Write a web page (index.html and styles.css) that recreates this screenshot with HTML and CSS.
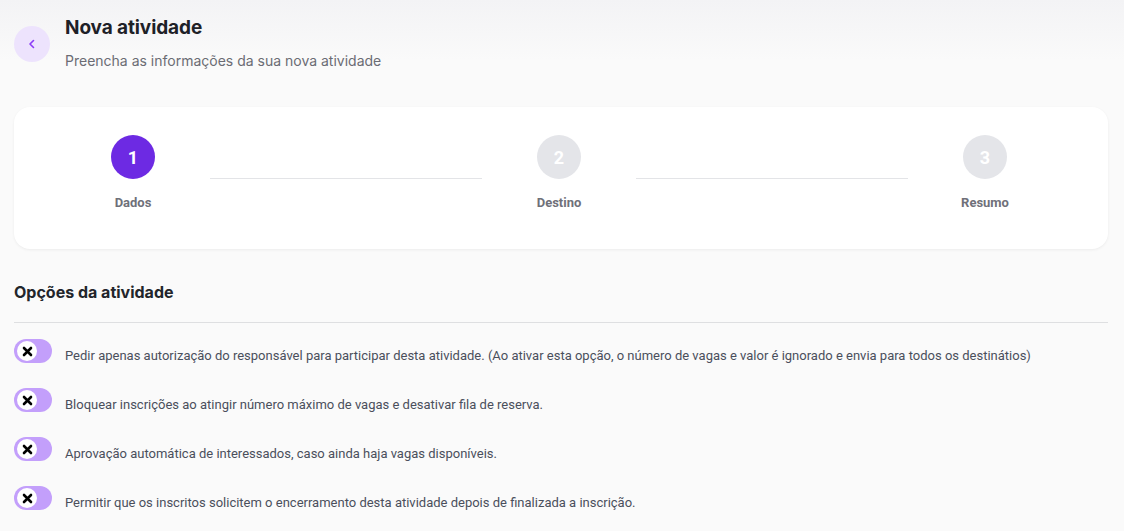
FILE: index.html
```html
<!DOCTYPE html>
<html lang="pt-BR">
<head>
    <meta charset="UTF-8">
    <meta name="viewport" content="width=device-width, initial-scale=1.0">
    <title>Nova atividade</title>
    <link rel="stylesheet" href="styles.css">
</head>
<body>
    <div class="page">
        <div class="header">
            <button class="back-btn" aria-label="Voltar">
                <svg width="12" height="12" viewBox="0 0 12 12"><path d="M7.5 2.5L4 6l3.5 3.5" fill="none" stroke="#8b3cf7" stroke-width="1.6" stroke-linecap="round" stroke-linejoin="round"/></svg>
            </button>
            <div class="header-text">
                <h1>Nova atividade</h1>
                <p>Preencha as informações da sua nova atividade</p>
            </div>
        </div>

        <div class="card steps">
            <div class="step active">
                <div class="circle">1</div>
                <div class="label">Dados</div>
            </div>
            <div class="line"></div>
            <div class="step">
                <div class="circle">2</div>
                <div class="label">Destino</div>
            </div>
            <div class="line"></div>
            <div class="step">
                <div class="circle">3</div>
                <div class="label">Resumo</div>
            </div>
        </div>

        <h2 class="section-title">Opções da atividade</h2>
        <hr class="divider">

        <div class="options">
            <label class="option">
                <span class="toggle"><span class="knob"><svg width="11" height="11" viewBox="0 0 11 11"><path d="M2 2l7 7M9 2l-7 7" stroke="#000" stroke-width="2.6" stroke-linecap="round"/></svg></span></span>
                <span class="option-text">Pedir apenas autorização do responsável para participar desta atividade. (Ao ativar esta opção, o número de vagas e valor é ignorado e envia para todos os destinátios)</span>
            </label>
            <label class="option">
                <span class="toggle"><span class="knob"><svg width="11" height="11" viewBox="0 0 11 11"><path d="M2 2l7 7M9 2l-7 7" stroke="#000" stroke-width="2.6" stroke-linecap="round"/></svg></span></span>
                <span class="option-text">Bloquear inscrições ao atingir número máximo de vagas e desativar fila de reserva.</span>
            </label>
            <label class="option">
                <span class="toggle"><span class="knob"><svg width="11" height="11" viewBox="0 0 11 11"><path d="M2 2l7 7M9 2l-7 7" stroke="#000" stroke-width="2.6" stroke-linecap="round"/></svg></span></span>
                <span class="option-text">Aprovação automática de interessados, caso ainda haja vagas disponíveis.</span>
            </label>
            <label class="option">
                <span class="toggle"><span class="knob"><svg width="11" height="11" viewBox="0 0 11 11"><path d="M2 2l7 7M9 2l-7 7" stroke="#000" stroke-width="2.6" stroke-linecap="round"/></svg></span></span>
                <span class="option-text">Permitir que os inscritos solicitem o encerramento desta atividade depois de finalizada a inscrição.</span>
            </label>
        </div>
    </div>
</body>
</html>
```

FILE: styles.css
```css
html {
    background: #fafafa;
}
body {
    margin: 0;
    font-family: Inter, "Liberation Sans", sans-serif;
    background: #fafafa;
    color: #1f2328;
}
.page {
    padding: 0 16px 0 14px;
    min-height: 531px;
    box-sizing: border-box;
    background: linear-gradient(#f3f3f5 0, #fafafa 60px, #fafafa 100%);
}
.header {
    display: flex;
    align-items: flex-start;
    padding-top: 16px;
    height: 107px;
    box-sizing: border-box;
}
.back-btn {
    width: 36px;
    height: 36px;
    margin-top: 10px;
    margin-right: 15px;
    border: none;
    border-radius: 50%;
    background-color: #ede3fd;
    display: flex;
    align-items: center;
    justify-content: center;
    padding: 0;
    cursor: pointer;
}
.header-text h1 {
    margin: 0;
    font-size: 19px;
    font-weight: 700;
    line-height: 24px;
    letter-spacing: -0.1px;
    color: #1e2127;
}
.header-text p {
    margin: 11px 0 0;
    font-size: 14px;
    line-height: 20px;
    color: #6b6c74;
}
.card {
    background: #fff;
    border-radius: 16px;
    box-shadow: 0 1px 3px rgba(0, 0, 0, 0.06);
}
.steps {
    display: flex;
    align-items: flex-start;
    padding: 28px 63px 0 59px;
    height: 142px;
    box-sizing: border-box;
}
.step {
    width: 120px;
    display: flex;
    flex-direction: column;
    align-items: center;
}
.circle {
    width: 44px;
    height: 44px;
    border-radius: 50%;
    background-color: #e4e5e9;
    color: #fff;
    font-family: Roboto, sans-serif;
    font-weight: 700;
    font-size: 18px;
    display: flex;
    align-items: center;
    justify-content: center;
}
.step.active .circle {
    background-color: #6d2ae3;
}
.label {
    margin-top: 14px;
    font-family: Roboto, sans-serif;
    font-size: 13px;
    font-weight: 700;
    line-height: 20px;
    color: #6f7079;
}
.line {
    flex: 1;
    height: 1px;
    margin: 43px 17px 0;
    background-color: #e3e4e7;
}
.section-title {
    margin: 33px 0 0;
    font-size: 16px;
    font-weight: 700;
    line-height: 20px;
    color: #22252b;
}
.divider {
    border: none;
    height: 1px;
    background-color: #dedfe1;
    margin: 20px 0 0;
}
.options {
    padding-top: 16px;
}
.option {
    display: flex;
    align-items: flex-start;
    height: 49px;
}
.toggle {
    flex-shrink: 0;
    width: 38px;
    height: 24px;
    border-radius: 12px;
    background-color: #c39ffb;
    display: flex;
    align-items: center;
    padding-left: 3px;
    box-sizing: border-box;
    margin-right: 13px;
}
.knob {
    width: 20px;
    height: 20px;
    border-radius: 50%;
    background: #fff;
    display: flex;
    align-items: center;
    justify-content: center;
}
.option-text {
    margin-top: 9px;
    font-family: Roboto, sans-serif;
    font-size: 13px;
    line-height: 16px;
    color: #4a4f5c;
}
```
